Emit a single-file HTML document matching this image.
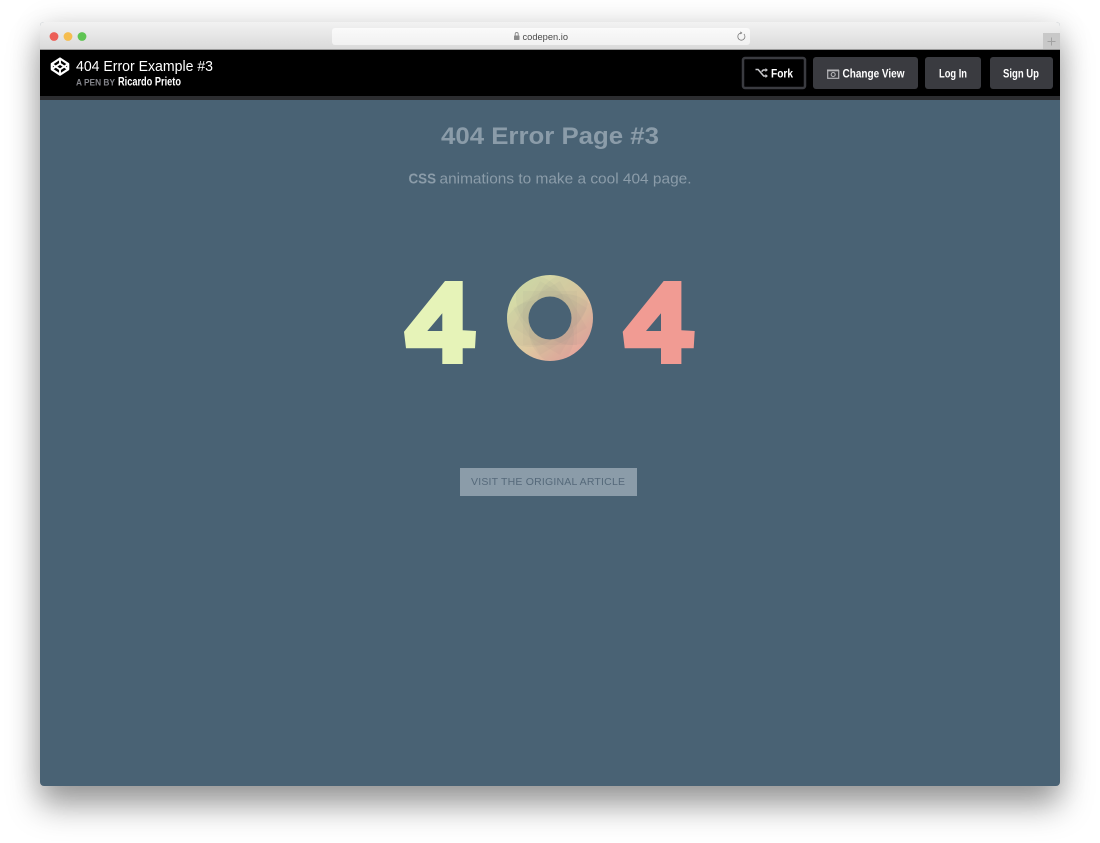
<!DOCTYPE html>
<html lang="en">
<head>
<meta charset="utf-8">
<title>404 Error Example #3</title>
<style>
html,body{margin:0;padding:0;width:1100px;height:843px;overflow:hidden;background:#fff}
#win{position:absolute;left:40px;top:22px;width:1020px;height:764px;border-radius:4px;background:#496274;box-shadow:0 20px 32px rgba(0,0,0,.36),0 2px 30px rgba(0,0,0,.13)}
svg{position:absolute;left:0;top:0;font-family:"Liberation Sans",sans-serif}
</style>
</head>
<body>
<div id="win"></div>
<svg width="1100" height="843" viewBox="0 0 1100 843">
<defs>
<linearGradient id="tb" x1="0" y1="0" x2="0" y2="1"><stop offset="0" stop-color="#f2f2f2"/><stop offset="1" stop-color="#d9d9d9"/></linearGradient>
<linearGradient id="url" x1="0" y1="0" x2="0" y2="1"><stop offset="0" stop-color="#fafafa"/><stop offset="1" stop-color="#f1f1f1"/></linearGradient>
<linearGradient id="ring" x1="0.1" y1="0.15" x2="0.85" y2="0.95"><stop offset="0" stop-color="#dbe5ab"/><stop offset=".55" stop-color="#e6cfa4"/><stop offset="1" stop-color="#f0a69f"/></linearGradient>
<clipPath id="rc"><circle cx="550" cy="318" r="43"/></clipPath>
</defs>

<!-- title bar -->
<path d="M40 50V26a4 4 0 0 1 4-4H1056a4 4 0 0 1 4 4V50Z" fill="url(#tb)"/>
<circle cx="54" cy="36.5" r="4.4" fill="#ec5f57"/>
<circle cx="68" cy="36.5" r="4.4" fill="#f5bd4f"/>
<circle cx="82" cy="36.5" r="4.4" fill="#5fc453"/>
<rect x="332" y="28" width="418" height="17" rx="3" fill="url(#url)"/>
<rect x="514" y="35.5" width="5.5" height="4.5" rx=".6" fill="#8a8a8a"/>
<path d="M515.2 35.5V34a1.5 1.5 0 0 1 3 0v1.5" fill="none" stroke="#8a8a8a" stroke-width=".9"/>
<text x="522.5" y="40" font-size="9.5" fill="#4a4a4a" textLength="45.5" lengthAdjust="spacingAndGlyphs">codepen.io</text>
<path d="M743.9 34a3.6 3.6 0 1 1-3-1" fill="none" stroke="#7a7a7a" stroke-width=".8"/>
<path d="M740.4 31.4l2 1.6-2 1.4Z" fill="#7a7a7a"/>
<rect x="1043" y="33" width="17" height="17" fill="#c8c8c8"/>
<path d="M1051.5 37.5v8M1047.5 41.5h8" stroke="#a2a2a2" stroke-width="1"/>
<rect x="40" y="49" width="1020" height="1" fill="#9a9a9a"/>

<!-- pen bar -->
<rect x="40" y="50" width="1020" height="46" fill="#000"/>
<rect x="40" y="96" width="1020" height="4" fill="#2c2d30"/>
<g fill="none" stroke="#fff" stroke-linejoin="round">
<path d="M60 58.5l8.2 5.4v5.4L60 74.7l-8.2-5.4v-5.4Z" stroke-width="2.2"/>
<path d="M60 58.5v5.2M60 69.5v5.2M51.8 63.9l8.2 5.6 8.2-5.6M51.8 69.3l8.2-5.6 8.2 5.6" stroke-width="1.9"/>
</g>
<text x="76" y="71" font-size="15" fill="#fff" textLength="137" lengthAdjust="spacingAndGlyphs">404 Error Example #3</text>
<text x="76" y="85.3" font-size="9" font-weight="700" fill="#85868c" textLength="39" lengthAdjust="spacingAndGlyphs">A PEN BY</text>
<text x="118" y="85.5" font-size="11.5" font-weight="700" fill="#fff" textLength="63" lengthAdjust="spacingAndGlyphs">Ricardo Prieto</text>

<!-- buttons -->
<rect x="743" y="58" width="62" height="30" rx="2" fill="#000" stroke="#3a3b40" stroke-width="2.5"/>
<path d="M755.5 69.5h2.6l5.6 6.5h2.6M761.6 71.7l1.6-1.7h2.8" fill="none" stroke="#c9c9cc" stroke-width="1.5"/>
<path d="M765.5 68l2.4 2-2.4 2ZM765.5 74l2.4 2-2.4 2Z" fill="#c9c9cc"/>
<text x="771" y="77.5" font-size="12" font-weight="700" fill="#fff" textLength="22" lengthAdjust="spacingAndGlyphs">Fork</text>

<rect x="813" y="57" width="105" height="32" rx="3" fill="#3a3b40"/>
<rect x="827.7" y="70.7" width="11" height="7.6" fill="none" stroke="#b5b5b8" stroke-width="1.2"/>
<circle cx="833.2" cy="74.5" r="2" fill="none" stroke="#b5b5b8" stroke-width="1.1"/>
<rect x="827" y="69.5" width="12" height="1.6" fill="#b5b5b8"/>
<text x="842.5" y="77.5" font-size="12" font-weight="700" fill="#fff" textLength="62" lengthAdjust="spacingAndGlyphs">Change View</text>

<rect x="925" y="57" width="56" height="32" rx="3" fill="#3a3b40"/>
<text x="939" y="77.5" font-size="12" font-weight="700" fill="#fff" textLength="28" lengthAdjust="spacingAndGlyphs">Log In</text>

<rect x="990" y="57" width="63" height="32" rx="3" fill="#3a3b40"/>
<text x="1003" y="77.5" font-size="12" font-weight="700" fill="#fff" textLength="36" lengthAdjust="spacingAndGlyphs">Sign Up</text>

<!-- headings -->
<text x="441" y="144" font-size="24" font-weight="700" fill="#8b9ca9" textLength="218" lengthAdjust="spacingAndGlyphs">404 Error Page #3</text>
<text x="408.5" y="183.5" font-size="15" font-weight="700" fill="#8b9ca9" textLength="27.5" lengthAdjust="spacingAndGlyphs">CSS</text>
<text x="439.5" y="183.5" font-size="15" fill="#8b9ca9" textLength="252" lengthAdjust="spacingAndGlyphs">animations to make a cool 404 page.</text>

<!-- 404 -->
<path fill-rule="evenodd" fill="#e6f3b8" d="M445 281H462.7V330.2L476 331 475 348.3H462.7V364H442.3V348.3H406L404 331.7ZM442.3 313.3L427.3 331H442.3Z"/>
<path fill-rule="evenodd" fill="#f19b93" d="M663.7 281H681.4V330.2L694.7 331 693.7 348.3H681.4V364H661V348.3H624.7L622.7 331.7ZM661 313.3L646 331H661Z"/>

<circle cx="550" cy="318" r="43" fill="url(#ring)"/>
<g clip-path="url(#rc)" fill="#496274" fill-opacity=".05">
<circle cx="565" cy="330" r="36"/>
<circle cx="538" cy="336" r="36"/>
<circle cx="530" cy="311" r="36"/>
<circle cx="552" cy="298" r="36"/>
<circle cx="572" cy="309" r="36"/>
<rect x="523" y="291" width="54" height="54" fill-opacity=".035"/>
<rect x="523" y="291" width="54" height="54" fill-opacity=".035" transform="rotate(30 550 318)"/>
<rect x="523" y="291" width="54" height="54" fill-opacity=".035" transform="rotate(60 550 318)"/>
</g>
<circle cx="550" cy="318" r="21.5" fill="#496274"/>

<!-- button -->
<rect x="460" y="468" width="177" height="28" fill="#8b9ca9"/>
<text x="471" y="485" font-size="10.5" fill="#55697a" textLength="154" lengthAdjust="spacing">VISIT THE ORIGINAL ARTICLE</text>
</svg>
</body>
</html>
